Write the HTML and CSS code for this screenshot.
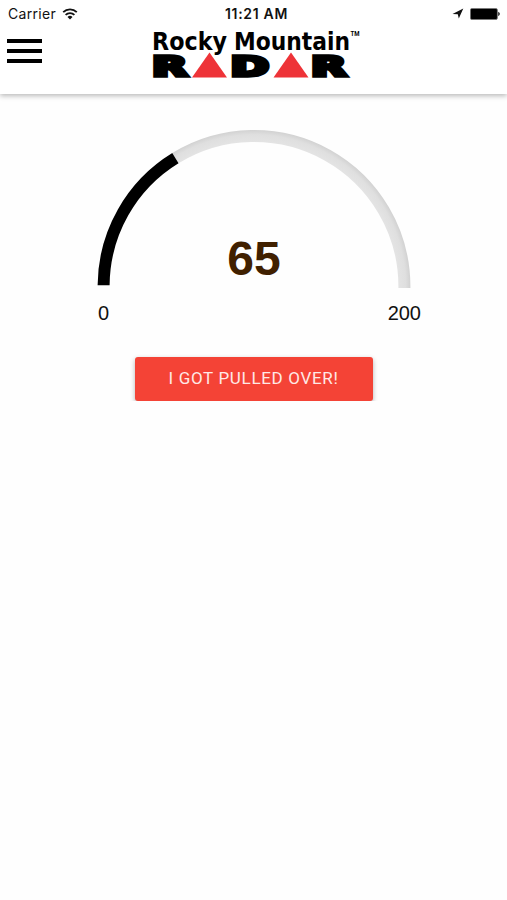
FILE: index.html
```html
<!DOCTYPE html>
<html lang="en">

<head>
    <meta charset="UTF-8">
    <meta name="viewport" content="width=device-width, initial-scale=1.0">
    <title>Rocky Mountain Radar</title>
    <link rel="stylesheet" href="styles.css">
</head>

<body>
    <header class="header">
        <!-- Status Bar -->
        <div class="status-bar">
            <div class="status-left">
                <span class="carrier">Carrier</span>
                <svg class="wifi" width="16" height="12" viewBox="0 0 16 12">
                    <path d="M1.2 4.2a9.7 9.7 0 0 1 13.6 0M3.6 6.9a6.3 6.3 0 0 1 8.8 0" fill="none" stroke="#111" stroke-width="1.8" />
                    <path d="M8 11.4L5.5 8.9a3.7 3.7 0 0 1 5 0z" fill="#111" />
                </svg>
            </div>
            <span class="clock">11:21 AM</span>
            <div class="status-right">
                <svg width="12" height="11" viewBox="0 0 12 11">
                    <path d="M11.3 .4L6.8 10.5 5.8 6.3 .5 6z" fill="#111" />
                </svg>
                <svg width="31" height="12" viewBox="0 0 31 12">
                    <rect x=".4" y=".4" width="27" height="11.2" rx="1.6" fill="#000" stroke="#777" stroke-width=".8" />
                    <path d="M28.2 3.8q3.4 2.2 0 4.4z" fill="#222" />
                </svg>
            </div>
        </div>

        <!-- Menu and Logo -->
        <div class="toolbar">
            <button class="menu-button" aria-label="Menu">
                <span></span>
                <span></span>
                <span></span>
            </button>
            <svg class="logo" width="210" height="60" viewBox="0 0 210 60">
                <text class="logo-name" x="0" y="22.5" textLength="75" lengthAdjust="spacingAndGlyphs">Rocky</text>
                <text class="logo-name" x="82" y="22.5" textLength="116" lengthAdjust="spacingAndGlyphs">Mountain</text>
                <text class="logo-tm" x="198.5" y="9" textLength="9" lengthAdjust="spacingAndGlyphs">TM</text>
                <text class="logo-radar" x="0" y="49" textLength="35.5" lengthAdjust="spacingAndGlyphs">R</text>
                <path d="M57.5 25.5L75 50.5H40z" fill="#ee3338" />
                <text class="logo-radar" x="78.5" y="49" textLength="38.5" lengthAdjust="spacingAndGlyphs">D</text>
                <path d="M139 25.5L156.5 50.5H121.5z" fill="#ee3338" />
                <text class="logo-radar" x="159" y="49" textLength="35.5" lengthAdjust="spacingAndGlyphs">R</text>
            </svg>
        </div>
    </header>

    <main class="main-container">
        <!-- Speed Gauge -->
        <div class="gauge-container">
            <svg class="gauge" width="314" height="158" viewBox="0 0 314 158">
                <defs>
                    <radialGradient id="track" gradientUnits="userSpaceOnUse" cx="157" cy="156.4" r="156.4">
                        <stop offset=".92" stop-color="#e4e4e4" />
                        <stop offset=".97" stop-color="#dfdfdf" />
                        <stop offset="1" stop-color="#d2d2d2" />
                    </radialGradient>
                </defs>
                <path d="M78.4 28.2A150.4 150.4 0 0 1 307.4 156.4V158" fill="none" stroke="url(#track)" stroke-width="12" />
                <path d="M6.6 155.2A150.4 150.4 0 0 1 78.4 28.2" fill="none" stroke="#000" stroke-width="12" />
            </svg>
            <div class="gauge-value">65</div>
        </div>
        <div class="gauge-labels">
            <span>0</span>
            <span>200</span>
        </div>

        <button class="pulled-over-button">I GOT PULLED OVER!</button>
    </main>
</body>

</html>
```
FILE: styles.css
```css
/* General Styles */
* {
    margin: 0;
    padding: 0;
    box-sizing: border-box;
}

body {
    font-family: "Liberation Sans", Arial, sans-serif;
    background-color: #fefefe;
    color: #111;
}

button {
    border: none;
    background: none;
}

/* Header */
.header {
    height: 94px;
    background-color: #fff;
    box-shadow: 0 2px 5px rgba(0, 0, 0, 0.27);
}

/* Status Bar */
.status-bar {
    display: grid;
    grid-template-columns: 1fr auto 1fr;
    align-items: center;
    height: 27px;
    padding: 0 6px 0 8px;
    font-family: Inter, sans-serif;
    font-size: 14px;
}

.status-left,
.status-right {
    display: flex;
    align-items: center;
    gap: 6px;
}

.status-right {
    justify-content: flex-end;
}

.carrier {
    letter-spacing: 0.3px;
}

.clock {
    font-size: 14px;
    font-weight: 600;
    letter-spacing: 0.7px;
    padding-left: 4px;
}

/* Toolbar */
.toolbar {
    display: flex;
    align-items: flex-start;
    gap: 110px;
    padding-left: 7px;
}

.menu-button {
    display: flex;
    flex-direction: column;
    gap: 6px;
    width: 35px;
    margin-top: 12px;
}

.menu-button span {
    width: 35px;
    height: 4px;
    background-color: #000;
}

.logo {
    fill: #000;
    overflow: visible;
}

.logo-name {
    font-family: "DejaVu Sans", sans-serif;
    font-size: 25.5px;
    font-weight: bold;
}

.logo-tm {
    font-family: Roboto, sans-serif;
    font-size: 7px;
    font-weight: bold;
}

.logo-radar {
    font-family: "DejaVu Sans", sans-serif;
    font-size: 27px;
    font-weight: bold;
    stroke: #000;
    stroke-width: 3.6px;
}

/* Gauge */
.main-container {
    display: flex;
    flex-direction: column;
    align-items: center;
    padding-top: 36px;
}

.gauge-container {
    display: grid;
    justify-items: center;
    width: 314px;
    height: 158px;
    margin-left: 1px;
}

.gauge,
.gauge-value {
    grid-area: 1 / 1;
}

.gauge-value {
    align-self: end;
    padding-bottom: 2px;
    color: #402000;
    font-size: 48px;
    font-weight: bold;
}

.gauge-labels {
    display: flex;
    justify-content: space-between;
    width: 323px;
    margin: 14px 0 0 12px;
    font-size: 20px;
}

/* Button */
.pulled-over-button {
    width: 238px;
    height: 44px;
    margin-top: 32px;
    padding-bottom: 2px;
    border-radius: 3px;
    background-color: #f44336;
    box-shadow: 0 2px 5px rgba(0, 0, 0, 0.3);
    color: #ffe9e6;
    font-family: Roboto, sans-serif;
    font-size: 17px;
    letter-spacing: 0.68px;
}
```
